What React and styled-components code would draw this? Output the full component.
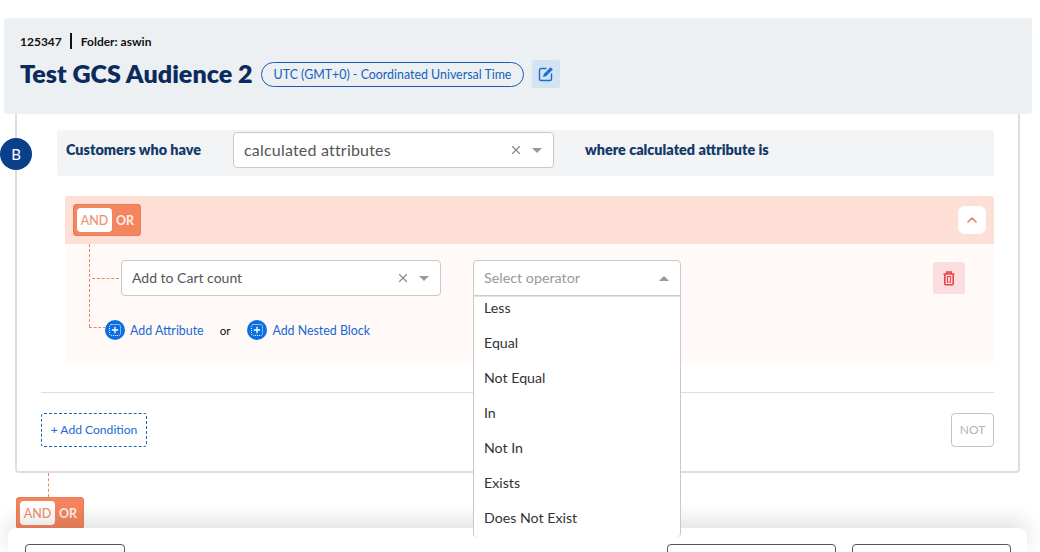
import React from "react";
import styled, { createGlobalStyle } from "styled-components";
import { ChevronUp, X } from "lucide-react";

const Global = createGlobalStyle`
  html, body { margin: 0; padding: 0; background: #fff; }
  * { box-sizing: border-box; }
  body { font-family: "Lato", "Noto Sans", sans-serif; }
`;

const Page = styled.div`
  position: relative;
  width: 1040px;
  height: 552px;
  overflow: hidden;
  padding-top: 18px;
  display: flex;
  flex-direction: column;
  background: #fff;
`;
const Header = styled.header`
  flex: none;
  height: 96px;
  margin: 0 8px 0 4px;
  padding: 14px 16px 0;
  background: #edf0f3;
  border-radius: 3px;
`;
const Meta = styled.div`
  display: flex;
  align-items: center;
  height: 18px;
  font-size: 12px;
  font-weight: 700;
  color: #111;
`;
const MetaDivider = styled.span`
  width: 2px;
  height: 16px;
  margin: 0 9px 0 8px;
  background: #111;
`;
const TitleRow = styled.div`
  display: flex;
  align-items: center;
  margin-top: 10px;
`;
const Title = styled.h1`
  flex: none;
  width: 232px;
  height: 28px;
  margin: 0;
  font-size: 25.1px;
  line-height: 26px;
  font-weight: 800;
  white-space: nowrap;
  color: #0c2b5c;
`;
const Zone = styled.span`
  display: flex;
  align-items: center;
  justify-content: center;
  width: 263px;
  height: 25px;
  margin-left: 9px;
  border: 1px solid #1760b5;
  border-radius: 13px;
  font-size: 12.4px;
  color: #1462bd;
`;
const EditButton = styled.button`
  display: flex;
  align-items: center;
  justify-content: center;
  width: 28px;
  height: 28px;
  margin-left: 8px;
  padding: 0;
  border: 0;
  border-radius: 3px;
  background: #d3e3f4;
  color: #1a6fd0;
`;
const Viewport = styled.div`
  flex: 1;
  min-height: 0;
  overflow: hidden;
  padding: 0 20px 0 15px;
`;
const Card = styled.section`
  position: relative;
  margin-top: -10px;
  height: 369px;
  padding: 24px 24px 0;
  border: 2px solid #dedede;
  border-radius: 4px;
`;
const Badge = styled.span`
  position: absolute;
  left: -17px;
  top: 32px;
  display: flex;
  align-items: center;
  justify-content: center;
  width: 32px;
  height: 32px;
  border-radius: 50%;
  background: #0a3f8c;
  color: #fff;
  font-size: 15px;
`;
const CustomerRow = styled.div`
  display: flex;
  align-items: center;
  height: 46px;
  margin-left: 16px;
  padding: 2px 0 8px 9px;
  background: #f3f4f5;
  border-radius: 3px;
`;
const RowLabel = styled.span`
  flex: none;
  width: ${(p) => p.$width}px;
  padding-bottom: 1px;
  font-size: 14.4px;
  font-weight: 800;
  color: #143a6b;
`;
const Select = styled.div`
  position: relative;
  flex: none;
  display: flex;
  align-items: center;
  width: ${(p) => p.$width}px;
  height: 36px;
  padding: 0 11px 0 10px;
  background: #fff;
  border: 1px solid #c9c9c9;
  border-radius: ${(p) => (p.$open ? "4px 4px 0 0" : "4px")};
  margin-right: ${(p) => p.$gap || 0}px;
  font-size: ${(p) => p.$size || 14}px;
  color: ${(p) => (p.$dim ? "#999" : "#555")};
`;
const SelectValue = styled.span`
  flex: 1;
  padding-bottom: 2px;
  letter-spacing: ${(p) => p.$track || 0}px;
  white-space: nowrap;
`;
const ClearIcon = styled(X)`
  flex: none;
  color: #888;
  margin-right: 9px;
`;
const Caret = styled.span`
  flex: none;
  width: 0;
  height: 0;
  border-left: 5px solid transparent;
  border-right: 5px solid transparent;
  border-top: ${(p) => (p.$up ? "0" : "5px solid #999")};
  border-bottom: ${(p) => (p.$up ? "5px solid #999" : "0")};
`;
const Group = styled.div`
  margin: 20px 0 0 24px;
`;
const GroupHead = styled.div`
  display: flex;
  align-items: center;
  justify-content: space-between;
  height: 48px;
  padding: 0 8px;
  background: #fddfd6;
  border-radius: 3px 3px 0 0;
`;
const Toggle = styled.div`
  flex: none;
  display: flex;
  align-items: center;
  width: 68px;
  height: 32px;
  padding: 0 4px;
  background: #f5855f;
  border-radius: 4px;
  box-shadow: inset 0 0 0 1px #ea7d59;
  font-size: 12.5px;
  font-weight: 700;
  color: rgba(255, 255, 255, 0.88);
`;
const ToggleOn = styled.span`
  display: flex;
  align-items: center;
  justify-content: center;
  width: 35px;
  height: 24px;
  margin-right: 4px;
  background: #fff;
  border-radius: 4px;
  color: #f0906f;
  font-weight: 500;
`;
const Collapse = styled.button`
  display: flex;
  align-items: center;
  justify-content: center;
  width: 28px;
  height: 28px;
  padding: 0;
  border: 0;
  border-radius: 7px;
  background: #fff;
  color: #e8866a;
`;
const GroupBody = styled.div`
  position: relative;
  height: 120px;
  padding: 16px 29px 0 56px;
  background: #fff9f7;
  border-radius: 0 0 3px 3px;
`;
const Line = styled.span`
  position: absolute;
  left: ${(p) => p.$x}px;
  top: ${(p) => p.$y}px;
  width: ${(p) => p.$w || 0}px;
  height: ${(p) => p.$h || 0}px;
  border-left: ${(p) => (p.$h ? "1px dashed #e8866a" : "0")};
  border-top: ${(p) => (p.$w ? "1px dashed #e8866a" : "0")};
`;
const ConditionRow = styled.div`
  display: flex;
  align-items: center;
`;
const Menu = styled.div`
  position: absolute;
  z-index: 5;
  left: -1px;
  top: 35px;
  width: 208px;
  height: 241px;
  overflow: hidden;
  background: #fff;
  border: 1px solid #c9c9c9;
  border-top-color: #e2e2e2;
  border-bottom: 0;
  border-radius: 0 0 4px 4px;
`;
const MenuList = styled.ul`
  margin: -6px 0 0;
  padding: 0;
  list-style: none;
`;
const MenuItem = styled.li`
  display: flex;
  align-items: center;
  height: 35px;
  padding: 0 0 2px 10px;
  font-size: 14.2px;
  color: #333;
`;
const TrashButton = styled.button`
  display: flex;
  align-items: center;
  justify-content: center;
  width: 32px;
  height: 32px;
  margin-left: auto;
  padding: 0;
  border: 0;
  border-radius: 3px;
  background: #fbdfe0;
  color: #ee3f48;
`;
const AddRow = styled.div`
  display: flex;
  align-items: center;
  height: 20px;
  margin: 24px 0 0 -16px;
`;
const AddLink = styled.span`
  display: flex;
  align-items: center;
  gap: 5px;
  font-size: 12.4px;
  color: #1769d2;
`;
const OrText = styled.span`
  margin: 0 17px 0 16px;
  font-size: 11.5px;
  color: #111;
`;
const Rule = styled.hr`
  margin: 28px 0 0;
  border: 0;
  border-top: 1px solid #dedede;
`;
const CardActions = styled.div`
  display: flex;
  justify-content: space-between;
  margin-top: 20px;
`;
const AddCondition = styled.button`
  width: 106px;
  height: 34px;
  padding: 0 0 2px;
  background: #fff;
  border: 1px dashed #1769b8;
  border-radius: 3px;
  font: inherit;
  font-size: 12.1px;
  color: #1769d2;
`;
const NotButton = styled.button`
  width: 43px;
  height: 34px;
  padding: 0 0 2px;
  background: #fff;
  border: 1px solid #c4c4c4;
  border-radius: 4px;
  font: inherit;
  font-size: 12px;
  color: #b5b5b5;
`;
const Connector = styled.div`
  width: 0;
  height: 24px;
  margin-left: 33px;
  border-left: 1px dashed #e8866a;
`;
const OuterToggle = styled.div`
  margin-left: 1px;
`;
const Footer = styled.footer`
  position: absolute;
  z-index: 2;
  left: 8px;
  bottom: 0;
  display: flex;
  gap: 16px;
  width: 1019px;
  height: 24px;
  padding: 16px 16px 0 17px;
  background: #fff;
  border-radius: 8px 8px 0 0;
  box-shadow: 0 -6px 22px rgba(0, 0, 0, 0.14);
  overflow: hidden;
`;
const FooterButton = styled.button`
  flex: none;
  width: ${(p) => p.$width}px;
  height: 40px;
  margin-left: ${(p) => (p.$push ? "auto" : "0")};
  background: #fff;
  border: 1px solid #555;
  border-radius: 4px;
`;

const PlusIcon = () => (
  <svg width="20" height="20" viewBox="0 0 20 20" aria-hidden="true">
    <circle cx="10" cy="10" r="10" fill="#0b6fe0" />
    <rect x="4.5" y="4.5" width="11" height="11" rx="2" fill="none" stroke="#fff" strokeWidth="1" strokeDasharray="1 1" />
    <path d="M10 6.8v6.4M6.8 10h6.4" stroke="#fff" strokeWidth="1.3" />
  </svg>
);

const EditIcon = () => (
  <svg width="16" height="16" viewBox="0 0 16 16" fill="none" aria-hidden="true">
    <path d="M8 2.5H3A1.5 1.5 0 0 0 1.5 4v9A1.5 1.5 0 0 0 3 14.5h9a1.5 1.5 0 0 0 1.5-1.5V8" stroke="currentColor" strokeWidth="1.4" strokeLinecap="round" />
    <path d="M12.6 1.2l2.2 2.2L8 10.2l-3 .8.8-3z" fill="currentColor" />
  </svg>
);

const TrashIcon = () => (
  <svg width="16" height="16" viewBox="0 0 16 16" fill="none" aria-hidden="true">
    <path d="M2.5 4h11M5.8 3.6V2h4.4v1.6" stroke="currentColor" strokeWidth="1.6" />
    <path d="M3.8 4.5v9a1.2 1.2 0 0 0 1.2 1.2h6a1.2 1.2 0 0 0 1.2-1.2v-9" stroke="currentColor" strokeWidth="1.6" />
    <rect x="6.4" y="6.6" width="3.2" height="5.6" stroke="currentColor" strokeWidth="1" />
  </svg>
);

const operators = ["Less", "Equal", "Not Equal", "In", "Not In", "Exists", "Does Not Exist"];

export default function App() {
  return (
    <Page>
      <Global />
      <Header>
        <Meta>
          125347
          <MetaDivider />
          Folder: aswin
        </Meta>
        <TitleRow>
          <Title>Test GCS Audience 2</Title>
          <Zone>UTC (GMT+0) - Coordinated Universal Time</Zone>
          <EditButton aria-label="Edit">
            <EditIcon />
          </EditButton>
        </TitleRow>
      </Header>
      <Viewport>
        <Card>
          <Badge>B</Badge>
          <CustomerRow>
            <RowLabel $width={167}>Customers who have</RowLabel>
            <Select $width={321} $gap={31} $size={16}>
              <SelectValue $track={0.2}>calculated attributes</SelectValue>
              <ClearIcon size={14} />
              <Caret />
            </Select>
            <RowLabel $width={220}>where calculated attribute is</RowLabel>
          </CustomerRow>
          <Group>
            <GroupHead>
              <Toggle>
                <ToggleOn>AND</ToggleOn>
                OR
              </Toggle>
              <Collapse aria-label="Collapse">
                <ChevronUp size={16} strokeWidth={2.5} />
              </Collapse>
            </GroupHead>
            <GroupBody>
              <Line $x={24} $y={0} $h={83} />
              <Line $x={27} $y={34} $w={27} />
              <Line $x={24} $y={83} $w={17} />
              <ConditionRow>
                <Select $width={320} $gap={32}>
                  <SelectValue>Add to Cart count</SelectValue>
                  <ClearIcon size={14} />
                  <Caret />
                </Select>
                <Select $width={208} $dim $open $size={14.3}>
                  <SelectValue>Select operator</SelectValue>
                  <Caret $up />
                  <Menu>
                    <MenuList>
                      {operators.map((op) => (
                        <MenuItem key={op}>{op}</MenuItem>
                      ))}
                    </MenuList>
                  </Menu>
                </Select>
                <TrashButton aria-label="Delete">
                  <TrashIcon />
                </TrashButton>
              </ConditionRow>
              <AddRow>
                <AddLink>
                  <PlusIcon />
                  Add Attribute
                </AddLink>
                <OrText>or</OrText>
                <AddLink>
                  <PlusIcon />
                  Add Nested Block
                </AddLink>
              </AddRow>
            </GroupBody>
          </Group>
          <Rule />
          <CardActions>
            <AddCondition>+ Add Condition</AddCondition>
            <NotButton>NOT</NotButton>
          </CardActions>
        </Card>
        <Connector />
        <OuterToggle>
          <Toggle>
            <ToggleOn>AND</ToggleOn>
            OR
          </Toggle>
        </OuterToggle>
      </Viewport>
      <Footer>
        <FooterButton $width={100} />
        <FooterButton $width={169} $push />
        <FooterButton $width={159} />
      </Footer>
    </Page>
  );
}
